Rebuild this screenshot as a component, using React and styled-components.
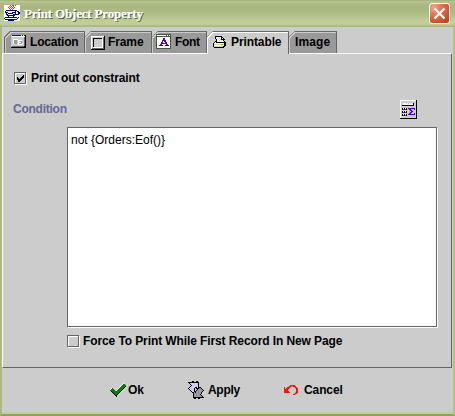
import React from 'react';
import styled, { createGlobalStyle, css } from 'styled-components';

const GlobalStyle = createGlobalStyle`
  * { box-sizing: border-box; }
  body { margin: 0; overflow: hidden; }
`;

const Dialog = styled.div`
  width: 455px;
  height: 416px;
  display: flex;
  flex-direction: column;
  font: bold 12px/14px "Liberation Sans", Arial, sans-serif;
  color: #000;
  background: #ccc;
  border: solid #abb981;
  border-width: 0 2px;
  border-right-color: #b3c181;
`;

const TitleBar = styled.header`
  flex: none;
  height: 27px;
  margin: 0 -2px;
  padding: 5px 5px 0 4px;
  display: flex;
  align-items: flex-start;
  background: linear-gradient(#94a56c 0, #b5c48c 1px, #b1c08a 3px, #a9b780 5px, #aab982 11px, #b9c891 18px, #c2cf99 23px, #bac98c 25px, #a2b06f 27px);
`;

const Title = styled.h1`
  flex: 1;
  margin: 1px 0 0 4px;
  font: bold 13px/16px "Liberation Serif", "Times New Roman", serif;
  letter-spacing: -0.18px;
  color: #fff;
  text-shadow: 1px 1px 0 #414b25;
  -webkit-text-stroke: 0.25px #fff;
`;

const CloseButton = styled.button`
  width: 21px;
  height: 21px;
  margin-top: -2px;
  padding: 0;
  border: 1px solid #fff;
  border-radius: 3px;
  display: grid;
  place-items: center;
  background: radial-gradient(circle at 20% 15%, #eba58c, #dc6b47 45%, #c84b20 80%, #b33d15);
`;

const Tabs = styled.nav`
  flex: none;
  height: 26px;
  padding: 4px 0 0 2px;
  display: flex;
`;

const Tab = styled.div`
  --edge: ${p => (p.$active ? '#fff' : '#ccc')};
  width: ${p => p.$width}px;
  height: ${p => (p.$active ? 23 : 22)}px;
  padding-left: ${p => p.$pad}px;
  display: flex;
  align-items: flex-start;
  gap: ${p => p.$gap || 0}px;
  letter-spacing: ${p => p.$spacing || '0'};
  white-space: nowrap;
  clip-path: polygon(0 6px, 6px 0, 100% 0, 100% 100%, 0 100%);
  border-top: 1px solid #666;
  border-right: 1px solid #666;
  background:
    linear-gradient(135deg, #666 4.1px, var(--edge) 4.2px 5px, transparent 5.1px),
    linear-gradient(var(--edge), var(--edge)) 0 0 / 100% 1px no-repeat,
    linear-gradient(var(--edge), var(--edge)) 0 6px / 1px 100% no-repeat,
    ${p => (p.$active ? '#ccc' : '#999')};
  ${p => p.$active && css`z-index: 1;`}
  ${p => p.$first && css`border-left: 1px solid #666;`}
`;

const TabIcon = styled.span`
  margin-top: ${p => p.$top}px;
`;

const TabText = styled.span`
  margin-top: 3px;
`;

const Panel = styled.main`
  flex: none;
  width: 450px;
  height: 315px;
  border: 1px solid #666;
  border-top-color: #fff;
  border-left-color: #fff;
  padding: 17px 13px 0 11px;
`;

const CheckRow = styled.label`
  display: flex;
  height: 15px;
  align-items: flex-start;
  gap: ${p => p.$gap}px;
  margin-left: ${p => p.$indent || 0}px;
  letter-spacing: ${p => p.$spacing};
  white-space: nowrap;
`;

const CheckBox = styled.span`
  width: 12px;
  height: 12px;
  margin: 1px 1px 0 0;
  flex: none;
  border: 1px solid #666;
  box-shadow: inset 1px 1px #fff, 1px 1px #fff;
  display: grid;
  place-items: center;
`;

const ConditionRow = styled.div`
  display: flex;
  justify-content: space-between;
  align-items: flex-start;
  height: 27px;
  margin-top: 14px;
`;

const ConditionLabel = styled.div`
  color: #669;
  margin: 2px 0 0 -1px;
  letter-spacing: -0.25px;
`;

const CalcButton = styled.button`
  width: 17px;
  height: 19px;
  padding: 0;
  margin-right: 21px;
  border: 0;
  display: block;
  background: #ccc;
`;

const Editor = styled.div`
  width: 370px;
  height: 200px;
  margin: 0 0 7px 53px;
  padding: 5px 3px;
  border: 1px solid #666;
  box-shadow: 1px 1px #fff;
  background: #fff;
  font-weight: normal;
`;

const Footer = styled.footer`
  flex: 1;
  display: flex;
  align-items: flex-start;
  padding: 13px 0 0 108px;
  margin: 0 -2px;
  border: solid #abb981;
  border-width: 0 2px 2px;
  border-right-color: #b3c181;
  border-bottom-color: #8f9e66;
  background: linear-gradient(#c2d092, #c2d092) 0 100% / 100% 2px no-repeat;
`;

const FooterButton = styled.div`
  display: flex;
  align-items: center;
  width: ${p => p.$width}px;
  height: 18px;
  gap: ${p => p.$gap}px;
  letter-spacing: ${p => p.$spacing || '0'};
`;

const PixelSvg = styled.svg`
  flex: none;
  display: block;
`;

const palette = {
  k: '#000', w: '#fff', g: '#999', d: '#666', l: '#ccc', b: '#0000ff',
  n: '#000099', r: '#ee3020', R: '#ff1100', G: '#008000', v: '#4b00ff',
  p: '#ccccff', y: '#ffe800', q: '#465945', s: '#33cc33',
};

function PixelIcon({ rows }) {
  const width = Math.max(...rows.map(r => r.length));
  return (
    <PixelSvg width={width} height={rows.length} viewBox={`0 0 ${width} ${rows.length}`} shapeRendering="crispEdges" aria-hidden="true">
      {rows.flatMap((row, y) => [...row].map((key, x) => palette[key]
        ? <rect key={`${x}-${y}`} x={x} y={y} width="1" height="1" fill={palette[key]} /> : null))}
    </PixelSvg>
  );
}

const icons = {
  java: [
    'wwwwwwrwrrwrwwww', 'wwwwwrwrwrwwwwww', 'wwwwrwrwrwrwwwww', 'wwwwwrwrwrwwwwww',
    'wwwwwwrwrwwwwwww', 'wwnnnnnnnnnnnwww', 'wnwwwwwwwwwnwnnw', 'wnnnwwwwnnnnwwnn',
    'wwnwnnnnnwwnwwnn', 'wwnnwwwwwnnnnnnw', 'wwwnnnnnnnnwwwww', 'wwwwnwwwwnwwwwww',
    'wnnnnnnnnnnnnwnw', 'nwwwwwwwwwwwwnww', 'wnnnnnnnnnnnnwww', 'wwwwnnnnnnwwwwww',
  ],
  location: [
    'lbbbbbbbbbwbwbk', 'lwwwwwwwwwwwwwk', 'llllllllllllldk', 'llllllllllllldk',
    'llwwwwwlllllldk', 'llwggglwwwwlldk', 'llwggglwlgglldk', 'llwggglwwwglldk',
    'llwggglwgggwldk', 'lllllllwwwwlldk', 'llllllllllllldk', 'lddddddddddddkk',
    'kkkkkkkkkkkkkkk',
  ],
  frame: [
    'wwwwwwwwwwwwwk', 'wllllllllllldk', 'wlkkkkkkkkkwdk', 'wlkllllllllwdk', 'wlkllllllllwdk',
    'wlkllllllllwdk', 'wlkllllllllwdk', 'wlkllllllllwdk', 'wlkllllllllwdk', 'wlkllllllllwdk',
    'wlkllllllllwdk', 'wlwwwwwwwwwwdk', 'wddddddddddddk', 'kkkkkkkkkkkkkk',
  ],
  font: [
    'qqqqqqqqqqqqqqq', 'qwwwwwwwwwqwqwq', 'qqqqqqqqqqqqqqq', 'qwwwwwwwwwwwwwq', 'qwwwwwwvvwwwwwq',
    'qwwwwwwvvwwwwwq', 'qwwwwwvvvvwwwwq', 'qwwwwwvwvvwwwwq', 'qwwwwvvwwvvwwwq', 'qwwwwvvvvvvwwwq',
    'qwwwvvwwwwvvwwq', 'qwwvvvvwwvvvvwq', 'qwwwwwwwwwwwwwq', 'qwwwwwwwwwwwwwq', 'qqqqqqqqqqqqqqq',
  ],
  printer: [
    '..kkkkkkk', '..kwwwwwkk', '..kwpwpwkwk', '...kwpwpkkkk', '...kwwpwpwk',
    '..kkwwwwwwwk', '.kwkkkkkkkkkk', 'kwwwwwwwwwwkk', 'klllllyysslkk', 'kwwwwwwwwwwkk',
    'klllllllllkk', '.kkkkkkkkkk',
  ],
  calculator: [
    'wwwwwwwwwwwwwwwwk', 'wllllllllllllllkk', 'wllllllllllllllkk', 'wllwwwlwlwlwlklkk',
    'wllwwwwwwwwwwklkk', 'wlkkkkkkkkkkkklkk', 'wllllllllllllllkk', 'wllllllllllllllkk',
    'wlkwkwklvvvvvvvkk', 'wlkdkdkllvvlllvkk', 'wlllllllllvvlllkk', 'wlkwkwkllllvvllkk',
    'wlkdkdklllvvlllkk', 'wllllllllvvlllvkk', 'wlkwkwklvvvvvvvkk', 'wlkdkdkllllllllkk',
    'wllllllllllllllkk', 'wllllllllllllllkk', 'kkkkkkkkkkkkkkkkk',
  ].map(row => row.replace(/kk$/, 'lk')).map((row, i) => (i === 18 ? 'k'.repeat(17) : row)),
  tick: ['......k', '.....kk', 'k...kkk', 'kk.kkk', 'kkkkk', '.kkk', '.kk'],
  ok: [
    '.............w..', '............wGG.', '...........wGGGG', '..........wGGGGk', '.........wGGGGk',
    '.wG.....wGGGGk', 'wGGG...wGGGGk', 'GGGGG.wGGGGk', '.kGGGGGGGGk', '..kGGGGGGk',
    '...kGGGGk', '....kGGk', '.....kk', '......k',
  ],
  apply: [
    '....kk..kk', 'kkkkkkkkkkk', '.kppppppppk', '..kpppppppk', '...kppppppk', '..kpppppppk',
    '.kpppppkkpkkk', 'kpppppk.kkkggk', '.kppppk..kggggk', '..kpppk.kggggggk', '...kppkkggggggk',
    '....kkgkgggggk', '.....kgggggggk', '.....kggggggk', '.....kgggggggk', '.....kggggggggk',
    '.....kkkkkkkkkkk', '......kk..kk',
  ],
  undo: [
    '......RRRRR', '....gRRggRRR', 'R..RRRg...gRR', 'R.RRRg.....gRR', 'RRRRg.......RR',
    'RRRR........RR', 'RRRRR.......RR', 'RRRRRR.....gRR', '..........gRR', '.........RRg',
  ],
};

export default function App() {
  return (
    <>
      <GlobalStyle />
      <Dialog>
        <TitleBar>
          <PixelIcon rows={icons.java} />
          <Title>Print Object Property</Title>
          <CloseButton aria-label="Close">
            <PixelSvg width="13" height="13" viewBox="0 0 13 13">
              <path d="M1.5 1.5 11.5 11.5M11.5 1.5 1.5 11.5" stroke="#fff" strokeWidth="2.2" />
            </PixelSvg>
          </CloseButton>
        </TitleBar>
        <Tabs>
          <Tab $first $width={81} $pad={6} $gap={4} $spacing="-0.2px">
            <TabIcon $top={3}><PixelIcon rows={icons.location} /></TabIcon><TabText>Location</TabText>
          </Tab>
          <Tab $width={67} $pad={6} $gap={3} $spacing="-0.1px">
            <TabIcon $top={4}><PixelIcon rows={icons.frame} /></TabIcon><TabText>Frame</TabText>
          </Tab>
          <Tab $width={55} $pad={4} $gap={4} $spacing="-0.3px">
            <TabIcon $top={2}><PixelIcon rows={icons.font} /></TabIcon><TabText>Font</TabText>
          </Tab>
          <Tab $active $width={82} $pad={6} $gap={5} $spacing="-0.1px">
            <TabIcon $top={4}><PixelIcon rows={icons.printer} /></TabIcon><TabText>Printable</TabText>
          </Tab>
          <Tab $width={48} $pad={6} $spacing="0.1px"><TabText>Image</TabText></Tab>
        </Tabs>
        <Panel>
          <CheckRow $gap={4} $spacing="-0.1px"><CheckBox><PixelIcon rows={icons.tick} /></CheckBox>Print out constraint</CheckRow>
          <ConditionRow>
            <ConditionLabel>Condition</ConditionLabel>
            <CalcButton aria-label="Edit expression"><PixelIcon rows={icons.calculator} /></CalcButton>
          </ConditionRow>
          <Editor>not {'{Orders:Eof()}'}</Editor>
          <CheckRow $gap={3} $indent={53} $spacing="-0.1px"><CheckBox />Force To Print While First Record In New Page</CheckRow>
        </Panel>
        <Footer>
          <FooterButton $width={78} $gap={2} $spacing="-0.1px"><PixelIcon rows={icons.ok} />Ok</FooterButton>
          <FooterButton $width={96} $gap={4} $spacing="-0.3px"><PixelIcon rows={icons.apply} />Apply</FooterButton>
          <FooterButton $width={70} $gap={6} $spacing="-0.1px"><PixelIcon rows={icons.undo} />Cancel</FooterButton>
        </Footer>
      </Dialog>
    </>
  );
}
